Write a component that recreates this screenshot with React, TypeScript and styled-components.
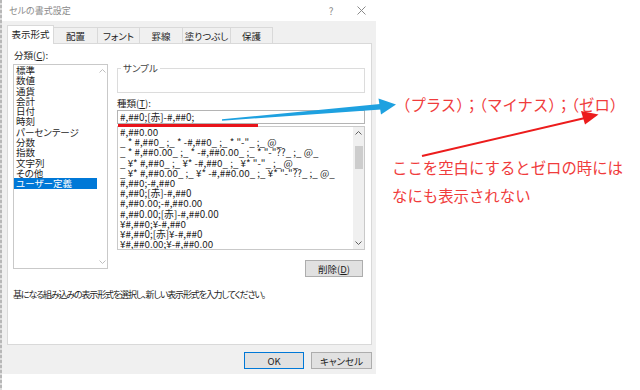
import React from "react";
import styled, { createGlobalStyle } from "styled-components";

const Global = createGlobalStyle`
  html, body { margin: 0; padding: 0; background: #fff; }
  body { font-family: "Noto Sans CJK JP", "Noto Sans", sans-serif; }
  #root { width: 640px; height: 390px; }
`;

const Page = styled.div`
  position: relative;
  width: 640px;
  height: 390px;
  display: flex;
  align-items: flex-start;
  overflow: hidden;
  background: #fff;
`;

const ExcelEdge = styled.div`
  width: 2px;
  height: 390px;
  background: repeating-linear-gradient(to bottom, #b8b8b8 0 3px, #dedede 3px 5px);
`;

const Dialog = styled.div`
  width: 374px;
  height: 374px;
  display: flex;
  flex-direction: column;
  background: #f0f0f0;
  font-family: "Noto Sans CJK JP", sans-serif;
  font-size: 9.5px;
  font-feature-settings: "palt";
  color: #1e1e1e;
`;

const TitleBar = styled.div`
  height: 21px;
  display: flex;
  align-items: center;
  background: #fff;
`;

const Title = styled.div`
  flex: 1;
  padding-left: 7px;
  color: #8a8a8a;
  font-size: 9px;
`;

const TitleButton = styled.div`
  width: 30px;
  height: 21px;
  display: flex;
  align-items: center;
  justify-content: center;
  color: #8a8a8a;
  font-size: 10px;
`;

const Body = styled.div`
  flex: 1;
  display: flex;
  flex-direction: column;
  padding: 4px 4px 6px 5px;
`;

const TabRow = styled.div`
  display: flex;
  align-items: flex-end;
  height: 19px;
  margin-bottom: -1px;
  position: relative;
  z-index: 1;
`;

const Tab = styled.div<{ $w: number; $active?: boolean }>`
  box-sizing: border-box;
  width: ${(p) => p.$w}px;
  height: ${(p) => (p.$active ? 19 : 16)}px;
  margin-bottom: ${(p) => (p.$active ? 0 : 1)}px;
  margin-left: -1px;
  &:first-child { margin-left: 0; }
  border: 1px solid #d9d9d9;
  border-bottom: none;
  background: ${(p) => (p.$active ? "#fff" : "#f0f0f0")};
  display: flex;
  align-items: center;
  justify-content: center;
  padding-bottom: ${(p) => (p.$active ? 2 : 0)}px;
`;

const Panel = styled.div`
  box-sizing: border-box;
  height: 302px;
  background: #fff;
  border: 1px solid #d9d9d9;
  padding: 5px 6px 0 5px;
  display: flex;
  flex-direction: column;
`;

const Columns = styled.div`
  display: grid;
  grid-template-columns: 95px 248px;
  column-gap: 9px;
  align-items: start;
`;

const Column = styled.div`
  display: flex;
  flex-direction: column;
`;

const FieldLabel = styled.div`
  height: 12px;
  line-height: 12px;
  padding-left: 1px;
  white-space: nowrap;
`;

const U = styled.span`
  text-decoration: underline;
`;

const ListBox = styled.div<{ $h: number; $mt: number }>`
  box-sizing: border-box;
  height: ${(p) => p.$h}px;
  margin-top: ${(p) => p.$mt}px;
  border: 1px solid #c9c9c9;
  display: flex;
  background: #fff;
  overflow: hidden;
`;

const Items = styled.div`
  flex: 1;
  min-width: 0;
  display: flex;
  flex-direction: column;
  overflow: hidden;
`;

const Item = styled.div<{ $lh: number; $selected?: boolean }>`
  flex-shrink: 0;
  height: ${(p) => p.$lh}px;
  line-height: ${(p) => p.$lh}px;
  padding-left: 2px;
  white-space: nowrap;
  background: ${(p) => (p.$selected ? "#0078d7" : "transparent")};
  color: ${(p) => (p.$selected ? "#fff" : "#1e1e1e")};
`;

const FormatItem = styled(Item)`
  font-size: 9.8px;
`;

const ScrollBar = styled.div<{ $w: number; $track: string }>`
  flex-shrink: 0;
  width: ${(p) => p.$w}px;
  background: ${(p) => p.$track};
  display: flex;
  flex-direction: column;
  align-items: center;
`;

const ArrowCell = styled.div`
  height: 12px;
  width: 100%;
  display: flex;
  align-items: center;
  justify-content: center;
`;

const Spacer = styled.div`
  flex: 1;
`;

const Thumb = styled.div`
  width: 8px;
  height: 23px;
  margin-top: 7px;
  background: #cdcdcd;
`;

const SampleBox = styled.div`
  box-sizing: border-box;
  margin-top: 19px;
  height: 25px;
  border: 1px solid #dcdcdc;
  display: flex;
  align-items: flex-start;
`;

const Legend = styled.div`
  margin: -7px 0 0 3px;
  padding: 0 2px;
  background: #fff;
  line-height: 12px;
  color: #444;
`;

const TypeLabel = styled(FieldLabel)`
  margin-top: 4px;
  padding-left: 0;
`;

const InputBox = styled.div`
  box-sizing: border-box;
  margin-top: 1px;
  height: 14px;
  border: 1px solid #b4b4b4;
  padding-left: 2px;
  line-height: 12px;
  font-size: 9.8px;
  white-space: nowrap;
`;

const Button = styled.div<{ $w: number; $default?: boolean }>`
  box-sizing: border-box;
  width: ${(p) => p.$w}px;
  height: 17px;
  background: #e1e1e1;
  border: 1px solid ${(p) => (p.$default ? "#0078d7" : "#adadad")};
  display: flex;
  align-items: center;
  justify-content: center;
`;

const DeleteButton = styled(Button)`
  align-self: flex-end;
  margin: 10px 2px 0 0;
`;

const Description = styled.div`
  margin-top: 12px;
  line-height: 12px;
  white-space: nowrap;
  font-size: 9px;
  letter-spacing: -1.15px;
`;

const Footer = styled.div`
  margin-top: 7px;
  display: flex;
  justify-content: flex-end;
  gap: 7px;
`;

const Notes = styled.div`
  display: flex;
  flex-direction: column;
  padding: 94px 0 0 16px;
  font-family: "Noto Sans CJK JP", sans-serif;
  color: #f03c3c;
  font-size: 15.4px;
`;

const NoteHead = styled.div`
  line-height: 20px;
  margin-left: 3px;
  white-space: nowrap;
`;

const NoteBody = styled.div`
  margin-top: 39px;
  line-height: 28px;
  white-space: nowrap;
`;

const Overlay = styled.svg`
  position: absolute;
  left: 0;
  top: 0;
  width: 640px;
  height: 390px;
  pointer-events: none;
`;

const Chevron = ({ dir, color }: { dir: "up" | "down"; color: string }) => (
  <svg width="7" height="4" viewBox="0 0 7 4">
    <path
      d={dir === "up" ? "M0.5 3.5 L3.5 0.5 L6.5 3.5" : "M0.5 0.5 L3.5 3.5 L6.5 0.5"}
      fill="none"
      stroke={color}
      strokeWidth="1"
    />
  </svg>
);

const tabs: [string, number][] = [
  ["表示形式", 47],
  ["配置", 45],
  ["フォント", 43],
  ["罫線", 44],
  ["塗りつぶし", 49],
  ["保護", 43],
];

const categories = [
  "標準",
  "数値",
  "通貨",
  "会計",
  "日付",
  "時刻",
  "パーセンテージ",
  "分数",
  "指数",
  "文字列",
  "その他",
  "ユーザー定義",
];

const formats = [
  "#,##0.00",
  '_ * #,##0_ ;_ * -#,##0_ ;_ * "-"_ ;_ @_',
  '_ * #,##0.00_ ;_ * -#,##0.00_ ;_ * "-"??_ ;_ @_',
  '_ ¥* #,##0_ ;_ ¥* -#,##0_ ;_ ¥* "-"_ ;_ @_',
  '_ ¥* #,##0.00_ ;_ ¥* -#,##0.00_ ;_ ¥* "-"??_ ;_ @_',
  "#,##0;-#,##0",
  "#,##0;[赤]-#,##0",
  "#,##0.00;-#,##0.00",
  "#,##0.00;[赤]-#,##0.00",
  "¥#,##0;¥-#,##0",
  "¥#,##0;[赤]¥-#,##0",
  "¥#,##0.00;¥-#,##0.00",
];

export default function App() {
  return (
    <>
      <Global />
      <Page>
        <ExcelEdge />
        <Dialog>
          <TitleBar>
            <Title>セルの書式設定</Title>
            <TitleButton>?</TitleButton>
            <TitleButton>
              <svg width="9" height="9" viewBox="0 0 9 9">
                <path d="M0.5 0.5 L8.5 8.5 M8.5 0.5 L0.5 8.5" stroke="#8a8a8a" strokeWidth="1" />
              </svg>
            </TitleButton>
          </TitleBar>
          <Body>
            <TabRow>
              {tabs.map(([label, w], i) => (
                <Tab key={label} $w={w} $active={i === 0}>
                  {label}
                </Tab>
              ))}
            </TabRow>
            <Panel>
              <Columns>
                <Column>
                  <FieldLabel>
                    分類(<U>C</U>):
                  </FieldLabel>
                  <ListBox $h={205} $mt={3}>
                    <Items>
                      {categories.map((c) => (
                        <Item key={c} $lh={10.3} $selected={c === "ユーザー定義"}>
                          {c}
                        </Item>
                      ))}
                    </Items>
                    <ScrollBar $w={10} $track="#fff">
                      <ArrowCell>
                        <Chevron dir="up" color="#bfbfbf" />
                      </ArrowCell>
                      <Spacer />
                      <ArrowCell>
                        <Chevron dir="down" color="#bfbfbf" />
                      </ArrowCell>
                    </ScrollBar>
                  </ListBox>
                </Column>
                <Column>
                  <SampleBox>
                    <Legend>サンプル</Legend>
                  </SampleBox>
                  <TypeLabel>
                    種類(<U>T</U>):
                  </TypeLabel>
                  <InputBox>#,##0;[赤]-#,##0;</InputBox>
                  <ListBox $h={124} $mt={2}>
                    <Items>
                      {formats.map((f) => (
                        <FormatItem key={f} $lh={10.2}>
                          {f}
                        </FormatItem>
                      ))}
                    </Items>
                    <ScrollBar $w={11} $track="#f0f0f0">
                      <ArrowCell>
                        <Chevron dir="up" color="#606060" />
                      </ArrowCell>
                      <Thumb />
                      <Spacer />
                      <ArrowCell>
                        <Chevron dir="down" color="#606060" />
                      </ArrowCell>
                    </ScrollBar>
                  </ListBox>
                  <DeleteButton $w={58}>
                    削除(<U>D</U>)
                  </DeleteButton>
                </Column>
              </Columns>
              <Description>
                基になる組み込みの表示形式を選択し、新しい表示形式を入力してください。
              </Description>
            </Panel>
            <Footer>
              <Button $w={60} $default>
                OK
              </Button>
              <Button $w={61}>キャンセル</Button>
            </Footer>
          </Body>
        </Dialog>
        <Notes>
          <NoteHead>（プラス）；（マイナス）；（ゼロ）</NoteHead>
          <NoteBody>
            ここを空白にするとゼロの時には
            <br />
            なにも表示されない
          </NoteBody>
        </Notes>
        <Overlay viewBox="0 0 640 390">
          <rect x="118" y="124" width="140" height="3" fill="#e8141b" />
          <polygon points="222,119.3 380,104 381,109.5 222,120.7" fill="#1ea1e0" />
          <polygon points="378.5,98.5 396,104.5 381,114.5" fill="#1ea1e0" />
          <line x1="422" y1="156" x2="585" y2="118" stroke="#ec1c1c" strokeWidth="2" />
          <polygon points="581,111 598.5,114.5 585,124.5" fill="#ec1c1c" />
        </Overlay>
      </Page>
    </>
  );
}
